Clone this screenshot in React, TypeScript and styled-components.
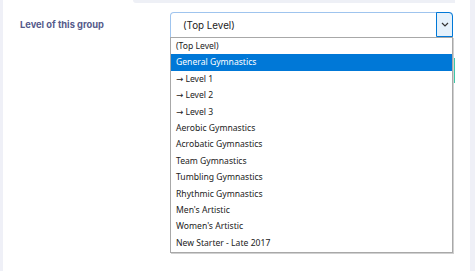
import * as React from "react";
import styled, { createGlobalStyle } from "styled-components";

const GlobalStyle = createGlobalStyle`
  html, body {
    margin: 0;
    padding: 0;
    background: #eff0f7;
  }
`;

const levels: string[] = [
  "(Top Level)",
  "General Gymnastics",
  "\u2192 Level 1",
  "\u2192 Level 2",
  "\u2192 Level 3",
  "Aerobic Gymnastics",
  "Acrobatic Gymnastics",
  "Team Gymnastics",
  "Tumbling Gymnastics",
  "Rhythmic Gymnastics",
  "Men's Artistic",
  "Women's Artistic",
  "New Starter - Late 2017",
];

const App = (): JSX.Element => {
  const [selected] = React.useState(1);

  const renderOptions = (): JSX.Element => {
    return (
      <OptionList>
        {levels.map((level, i) => (
          <Option key={level} active={i === selected}>
            {level}
          </Option>
        ))}
      </OptionList>
    );
  };

  return (
    <>
      <GlobalStyle />
      <Page>
        <Card>
          <PreviousField />
          <FormRow>
            <Label>Level of this group</Label>
            <SelectWrap>
              <SelectBox>
                <SelectValue>(Top Level)</SelectValue>
                <ArrowBox>
                  <svg width="8" height="5" viewBox="0 0 8 5">
                    <path d="M1 1l3 3 3-3" fill="none" stroke="#333" strokeWidth="1.2" />
                  </svg>
                </ArrowBox>
              </SelectBox>
              <SaveButton />
              {renderOptions()}
            </SelectWrap>
          </FormRow>
        </Card>
      </Page>
    </>
  );
};

export default App;

const Page = styled.div`
  display: flex;
  height: 271px;
  padding: 0 5px 0 3px;
`;

const Card = styled.div`
  flex: 1;
  background: #ffffff;
  position: relative;
`;

const PreviousField = styled.div`
  margin-left: 130px;
  width: 322px;
  height: 3px;
  background: #eef0f6;
  border-bottom-left-radius: 4px;
`;

const FormRow = styled.div`
  display: flex;
  align-items: flex-start;
  padding-top: 9px;
`;

const Label = styled.div`
  width: 150px;
  padding: 7px 0 0 17px;
  font-family: "Inter", "Noto Sans", sans-serif;
  font-weight: 700;
  font-size: 9.3px;
  color: #555a8b;
`;

const SelectWrap = styled.div`
  position: relative;
  width: 283px;
`;

const SelectBox = styled.div`
  display: flex;
  align-items: stretch;
  height: 25px;
  border: 1px solid #9fc4ee;
  border-bottom: none;
  border-radius: 4px 4px 0 0;
  box-sizing: border-box;
`;

const SelectValue = styled.div`
  flex: 1;
  display: flex;
  align-items: center;
  padding-left: 12px;
  font-family: "Inter", "Noto Sans", sans-serif;
  font-size: 9.8px;
  color: #222;
`;

const ArrowBox = styled.div`
  width: 15px;
  display: flex;
  align-items: center;
  justify-content: center;
  background: #e5f1fb;
  border: 1px solid #0078d7;
  margin: -1px -1px 0 0;
  border-radius: 0 4px 0 0;
`;

const SaveButton = styled.div`
  margin-top: 21px;
  margin-left: auto;
  width: 60px;
  height: 25px;
  background: #3cc8a8;
  margin-right: -2px;
`;

const OptionList = styled.ul`
  position: absolute;
  top: 25px;
  left: 0;
  width: 283px;
  margin: 0;
  padding: 0 0 1px;
  list-style: none;
  background: #ffffff;
  border: 1px solid #a8a8a8;
  box-sizing: border-box;
  box-shadow: 1px 1px 0 #d0d0d0;
`;

const Option = styled.li<{ active?: boolean }>`
  height: 16.4px;
  line-height: 16.4px;
  padding-left: 5px;
  font-family: "Noto Sans", "DejaVu Sans", sans-serif;
  font-size: 8.6px;
  white-space: nowrap;
  color: ${props => (props.active ? "#ffffff" : "#222")};
  background: ${props => (props.active ? "#0078d7" : "transparent")};
`;
